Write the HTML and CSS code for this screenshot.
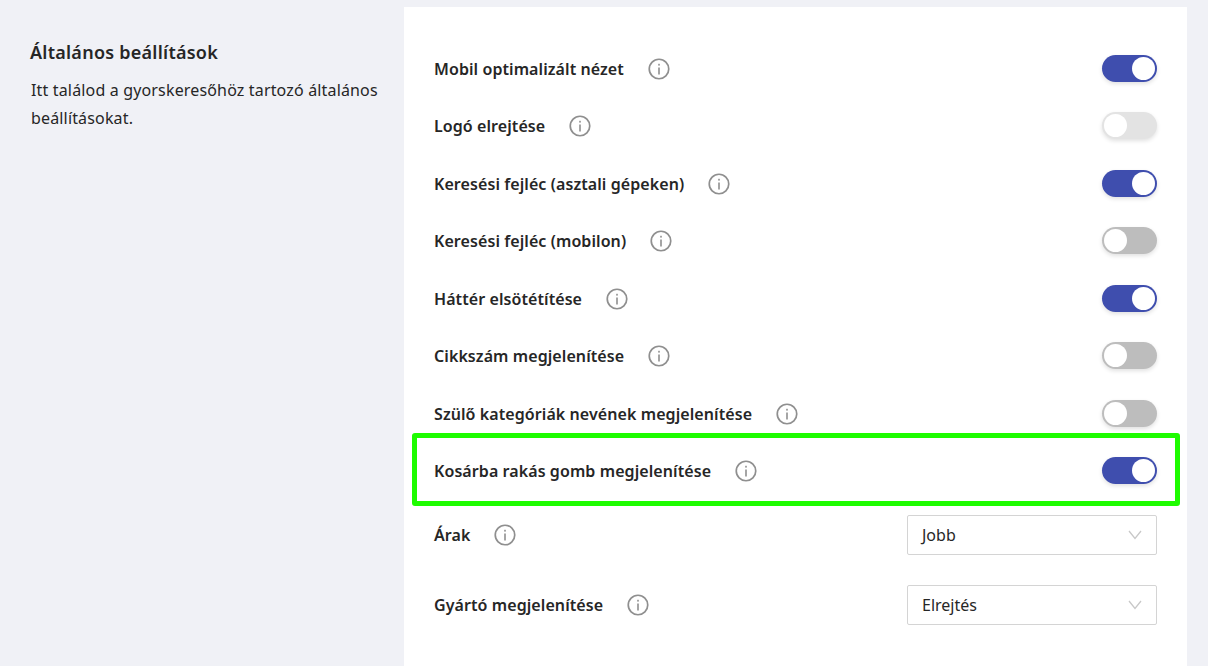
FILE: index.html
```html
<!DOCTYPE html>
<html lang="hu">
<head>
    <meta charset="UTF-8">
    <meta name="viewport" content="width=device-width, initial-scale=1.0">
    <title>Általános beállítások</title>
    <link rel="stylesheet" href="styles.css">
</head>
<body>
    <svg class="icon-defs" width="0" height="0">
        <symbol id="info" viewBox="0 0 22 22">
            <circle cx="11" cy="11" r="9.75" fill="none" stroke="#8f8f8f" stroke-width="1.7"/>
            <rect x="10.2" y="9.5" width="1.6" height="7" fill="#8f8f8f"/>
            <rect x="10.2" y="5.8" width="1.6" height="1.8" fill="#8f8f8f"/>
        </symbol>
        <symbol id="chevron" viewBox="0 0 14 10">
            <path d="M1 1 L7 8.5 L13 1" fill="none" stroke="#c8c8c8" stroke-width="1.3"/>
        </symbol>
    </svg>

    <div class="layout">
        <aside class="intro">
            <h2 class="intro-title">Általános beállítások</h2>
            <p class="intro-text">Itt találod a gyorskeresőhöz tartozó általános beállításokat.</p>
        </aside>

        <main class="card">
            <div class="row">
                <span class="row-label">Mobil optimalizált nézet</span>
                <svg class="info"><use href="#info"/></svg>
                <span class="toggle on"></span>
            </div>
            <div class="row">
                <span class="row-label">Logó elrejtése</span>
                <svg class="info"><use href="#info"/></svg>
                <span class="toggle disabled"></span>
            </div>
            <div class="row">
                <span class="row-label">Keresési fejléc (asztali gépeken)</span>
                <svg class="info"><use href="#info"/></svg>
                <span class="toggle on"></span>
            </div>
            <div class="row">
                <span class="row-label">Keresési fejléc (mobilon)</span>
                <svg class="info"><use href="#info"/></svg>
                <span class="toggle"></span>
            </div>
            <div class="row">
                <span class="row-label">Háttér elsötétítése</span>
                <svg class="info"><use href="#info"/></svg>
                <span class="toggle on"></span>
            </div>
            <div class="row">
                <span class="row-label">Cikkszám megjelenítése</span>
                <svg class="info"><use href="#info"/></svg>
                <span class="toggle"></span>
            </div>
            <div class="row">
                <span class="row-label">Szülő kategóriák nevének megjelenítése</span>
                <svg class="info"><use href="#info"/></svg>
                <span class="toggle"></span>
            </div>
            <div class="row highlighted">
                <span class="row-label">Kosárba rakás gomb megjelenítése</span>
                <svg class="info"><use href="#info"/></svg>
                <span class="toggle on"></span>
            </div>

            <div class="select-rows">
                <div class="select-row">
                    <span class="row-label">Árak</span>
                    <svg class="info"><use href="#info"/></svg>
                    <div class="select">
                        <span>Jobb</span>
                        <svg class="chevron"><use href="#chevron"/></svg>
                    </div>
                </div>
                <div class="select-row">
                    <span class="row-label">Gyártó megjelenítése</span>
                    <svg class="info"><use href="#info"/></svg>
                    <div class="select">
                        <span>Elrejtés</span>
                        <svg class="chevron"><use href="#chevron"/></svg>
                    </div>
                </div>
            </div>
        </main>
    </div>
</body>
</html>
```

FILE: styles.css
```css
* {
    margin: 0;
    padding: 0;
    box-sizing: border-box;
}

html, body {
    height: 100%;
    overflow: hidden;
}

body {
    background-color: #f0f1f6;
    color: #262626;
    font-family: "Noto Sans", "Open Sans", sans-serif;
    font-size: 16px;
}

.icon-defs {
    position: absolute;
}

.layout {
    display: flex;
    height: 100%;
    padding: 7px 21px 0 30px;
}

.intro {
    width: 374px;
    flex-shrink: 0;
    padding-top: 33px;
}

.intro-title {
    font-size: 18px;
    font-weight: 600;
    line-height: 24px;
    letter-spacing: 0.25px;
    margin-bottom: 12px;
}

.intro-text {
    font-size: 16px;
    line-height: 28px;
    letter-spacing: 0.16px;
    width: 350px;
    padding-left: 1px;
}

.card {
    flex: 1;
    background-color: #fff;
    padding: 33px 30px 0;
}

.row {
    position: relative;
    display: flex;
    align-items: center;
    height: 57.5px;
}

.row-label {
    font-size: 16px;
    font-weight: 600;
    letter-spacing: 0.08px;
    white-space: nowrap;
}

.info {
    width: 22px;
    height: 22px;
    margin-left: 24px;
    flex-shrink: 0;
}

.toggle {
    position: relative;
    display: block;
    width: 55px;
    height: 27px;
    margin-left: auto;
    margin-bottom: 1px;
    border-radius: 14px;
    background-color: #bdbdbd;
    box-shadow: 0 2px 4px rgba(0, 0, 0, 0.12);
}

.toggle::after {
    content: "";
    position: absolute;
    top: 2px;
    left: 2px;
    width: 23px;
    height: 23px;
    border-radius: 50%;
    background-color: #fff;
}

.toggle.on {
    background-color: #3f4eae;
}

.toggle.on::after {
    left: 30px;
}

.toggle.disabled {
    background-color: #e3e3e3;
}

.highlighted::before {
    content: "";
    position: absolute;
    top: -10px;
    bottom: -6px;
    left: -22px;
    right: -23px;
    border: 5px solid #1efc00;
    border-radius: 3px;
}

.select-rows {
    display: flex;
    flex-direction: column;
    gap: 30px;
    margin-top: 15px;
}

.select-row {
    display: flex;
    align-items: center;
    height: 40px;
}

.select {
    display: flex;
    align-items: center;
    justify-content: space-between;
    width: 250px;
    height: 40px;
    margin-left: auto;
    padding: 0 14px;
    border: 1px solid #d4d4d4;
    border-radius: 2px;
    font-size: 16px;
}

.chevron {
    width: 14px;
    height: 10px;
    margin-top: -1px;
}
```
